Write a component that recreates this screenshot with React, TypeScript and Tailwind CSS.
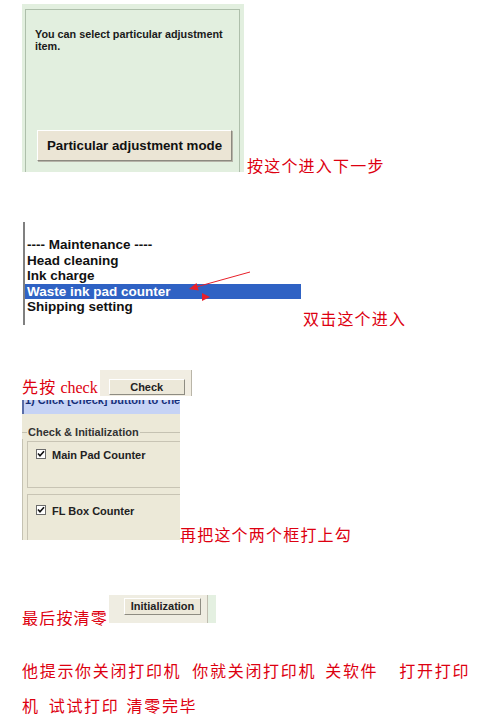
import React from 'react';

const cjk = "font-['Noto_Sans_CJK_SC',sans-serif]";
const ui = "font-['Liberation_Sans',Arial,sans-serif]";

const Note = ({ children, className = '' }: { children: React.ReactNode; className?: string }) => (
  <span className={`${cjk} text-[16px] leading-[16px] tracking-[1.2px] text-[#dd0010] whitespace-nowrap ${className}`}>
    {children}
  </span>
);

const XpButton = ({ label, className = '' }: { label: string; className?: string }) => (
  <div
    className={`${ui} flex items-center justify-center bg-[#ece8d9] border border-t-white border-l-white border-b-[#8e8c82] border-r-[#8e8c82] font-bold text-[11px] leading-none text-[#222] ${className}`}
  >
    {label}
  </div>
);

const Tick = () => (
  <div className="w-[10px] h-[10px] bg-white border border-[#6b6b6b] flex items-center justify-center">
    <svg width="8" height="8" viewBox="0 0 8 8">
      <path d="M1 3.5 L3 5.8 L7 1.2" fill="none" stroke="#111" strokeWidth="1.6" />
    </svg>
  </div>
);

const menuItems = ['---- Maintenance ----', 'Head cleaning', 'Ink charge', 'Waste ink pad counter', 'Shipping setting'];

export default function App() {
  return (
    <div className="w-[500px] h-[720px] bg-white pl-[22px] pt-[4px] overflow-hidden">
      {/* step 1: adjustment mode panel */}
      <div className="flex items-end">
        <div className="w-[222px] h-[168px] bg-[#e2efdf] pt-[5px] pl-[3px] pr-[4px]">
          <div className="h-full border-l border-t border-r border-[#aebfab] flex flex-col pl-[9px] pt-[18px]">
            <p className={`${ui} font-bold text-[10.8px] leading-[12px] text-[#1a1a1a]`}>
              You can select particular adjustment
              <br />
              item.
            </p>
            <div
              className={`${ui} mt-auto mb-[11px] ml-[2px] w-[195px] h-[31px] flex items-center justify-center bg-[#ebe5d5] border border-t-white border-l-white border-b-[#8c8a80] border-r-[#8c8a80] shadow-[1px_1px_0_#b5b3a8] font-bold text-[13.3px] text-[#111]`}
            >
              Particular adjustment mode
            </div>
          </div>
        </div>
        <Note className="ml-[3px] mb-[-1px]">按这个进入下一步</Note>
      </div>

      {/* step 2: maintenance list */}
      <div className="mt-[50px] flex items-end">
        <div className="relative ml-[1px] w-[278px] h-[103px] border-l-2 border-[#808080] pt-[15px]">
          {menuItems.map((item) => (
            <div
              key={item}
              className={`${ui} h-[15.5px] leading-[15.5px] pl-[2px] font-bold text-[13.5px] ${
                item === 'Waste ink pad counter' ? 'bg-[#2f62c4] text-white' : 'text-[#111]'
              }`}
            >
              {item}
            </div>
          ))}
          <svg className="absolute left-0 top-0" width="278" height="103" viewBox="0 0 278 103">
            <line x1="225" y1="50" x2="171" y2="65" stroke="#e8202a" strokeWidth="1" />
            <polygon points="164,67 173.7,68.4 171.5,61" fill="#e8202a" />
            <polygon points="177,71 185,75 177,79" fill="#e8202a" />
          </svg>
        </div>
        <Note className="ml-[2px] mb-[-1px]">双击这个进入</Note>
      </div>

      {/* step 3: check */}
      <div className="mt-[45px] flex items-end">
        <span className={`${cjk} text-[16px] leading-[16px] tracking-[1.2px] text-[#dd0010] whitespace-nowrap`}>
          先按
          <span className="font-['Liberation_Serif','Times_New_Roman',serif] tracking-normal"> check</span>
        </span>
        <div className="ml-[2px] w-[92px] h-[26px] bg-[#f1ede2] border-r border-[#b9b5a8] pt-[9px] pl-[9px]">
          <XpButton label="Check" className="w-[76px] h-[16px]" />
        </div>
      </div>

      {/* step 4: counters */}
      <div className="mt-[4px] flex items-end">
        <div className="w-[158px] h-[140px] bg-[#ece9d8] flex flex-col overflow-hidden">
          <div className="h-[14px] shrink-0 bg-[#c6d3f5] border-l-2 border-[#5a6ea8] overflow-hidden pl-[1px]">
            <p className={`${ui} mt-[-6px] whitespace-nowrap font-bold text-[11px] leading-[13px] text-[#17307a]`}>
              1) Click [Check] button to check
            </p>
          </div>
          <div className="mt-[12px] h-[13px] flex items-center shrink-0">
            <div className="w-[5px] border-t border-[#c5c2b2]" />
            <span className={`${ui} px-[1px] whitespace-nowrap font-bold text-[11px] leading-[13px] text-[#333]`}>
              Check &amp; Initialization
            </span>
            <div className="flex-1 border-t border-[#c5c2b2]" />
          </div>
          <div className="flex-1 border-l border-[#c5c2b2] pl-[4px] pt-[2px]">
            <div className="w-[200px] h-[47px] border border-[#c8c4b4] pl-[8px] pt-[7px] flex items-start">
              <Tick />
              <span className={`${ui} ml-[6px] whitespace-nowrap font-bold text-[11px] leading-[12px] text-[#222]`}>
                Main Pad Counter
              </span>
            </div>
            <div className="mt-[6px] w-[200px] h-[60px] border border-[#c8c4b4] pl-[8px] pt-[10px] flex items-start">
              <Tick />
              <span className={`${ui} ml-[6px] whitespace-nowrap font-bold text-[11px] leading-[12px] text-[#222]`}>
                FL Box Counter
              </span>
            </div>
          </div>
        </div>
        <Note className="mb-[-2px]">再把这个两个框打上勾</Note>
      </div>

      {/* step 5: initialization */}
      <div className="mt-[55px] flex items-end">
        <Note className="mb-[-2px]">最后按清零</Note>
        <div className="ml-[1px] flex w-[107px] h-[28px]">
          <div className="w-[99px] bg-[#efede2] border-r border-[#c0bdb0] pt-[3px] pl-[15px]">
            <XpButton label="Initialization" className="w-[77px] h-[17px]" />
          </div>
          <div className="flex-1 bg-[#e4f0e1]" />
        </div>
      </div>

      {/* final note */}
      <p className={`${cjk} mt-[30px] text-[16px] leading-[35px] tracking-[1.7px] text-[#dd0010] whitespace-nowrap`}>
        他提示你关闭打印机<span className="inline-block w-[11px]" />你就关闭打印机
        <span className="inline-block w-[9px]" />关软件<span className="inline-block w-[21px]" />打开打印
        <br />
        机<span className="inline-block w-[9px]" />试试打印<span className="inline-block w-[7px]" />清零完毕
      </p>
    </div>
  );
}
